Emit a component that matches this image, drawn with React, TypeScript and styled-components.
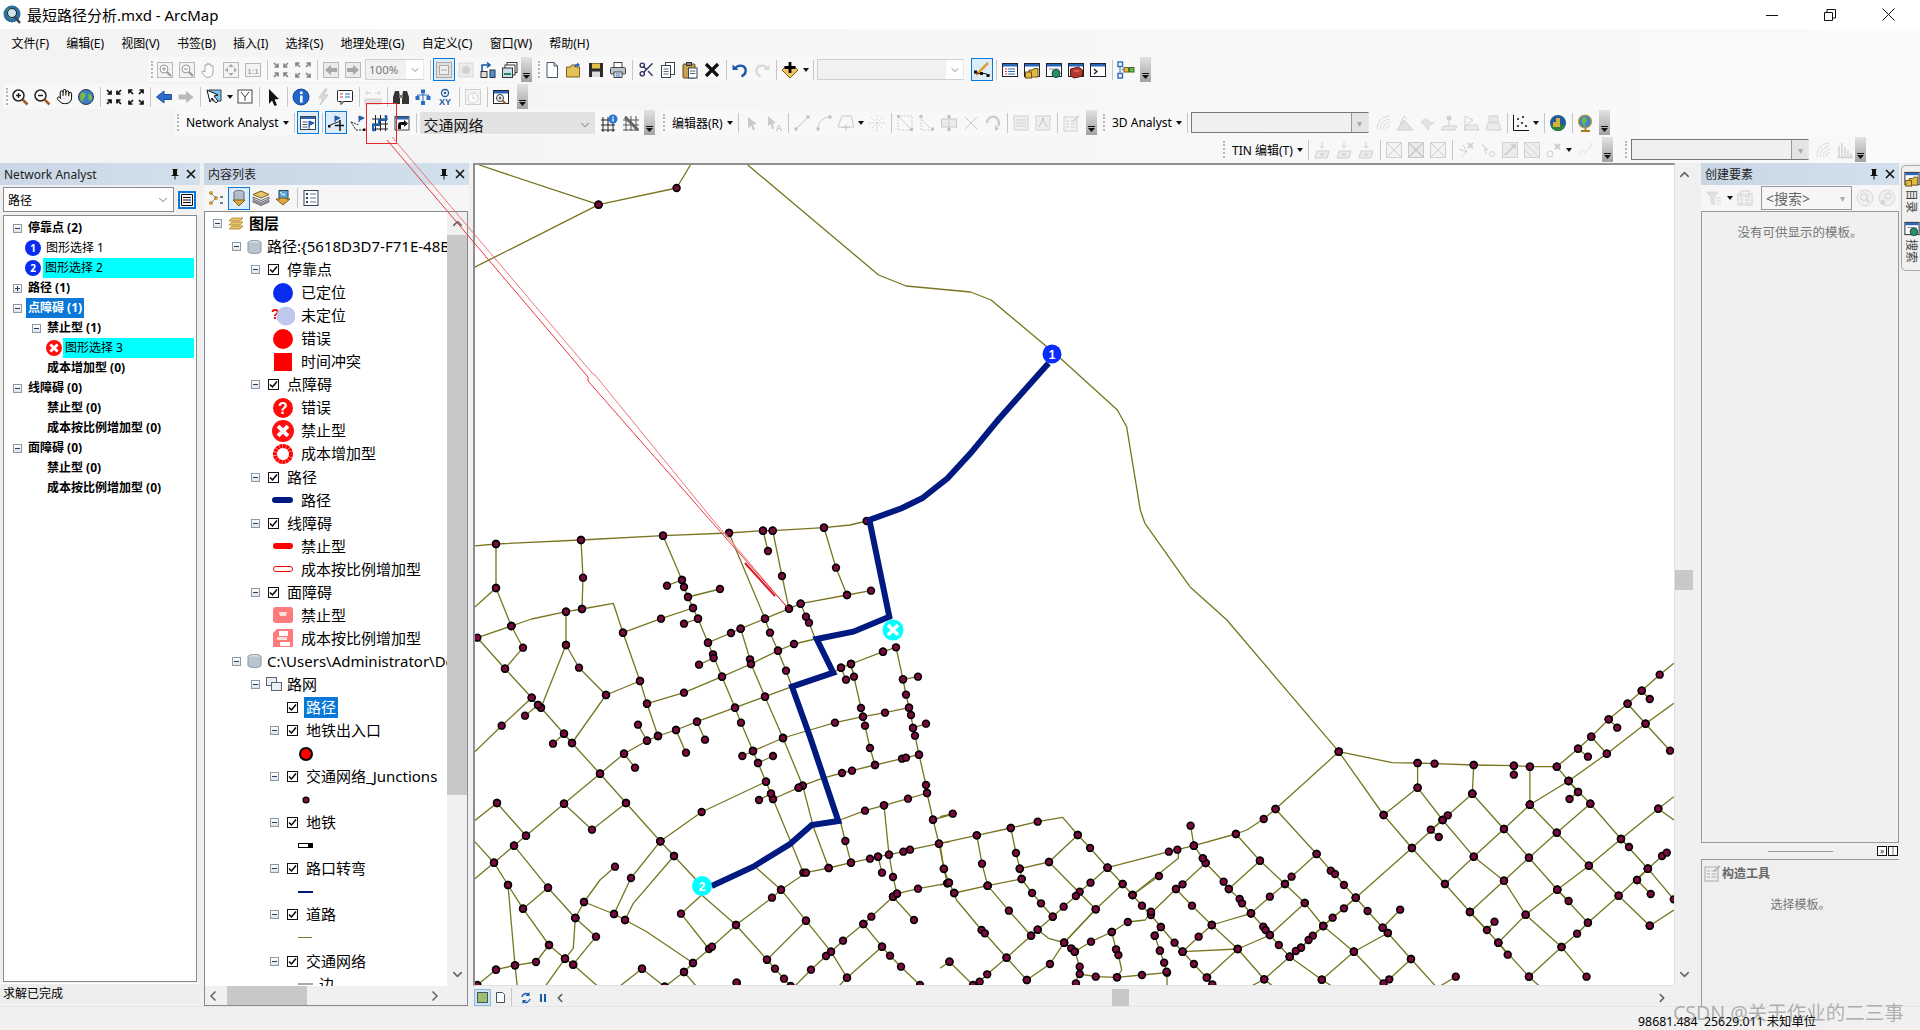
import React from 'react'
import styled, { createGlobalStyle } from 'styled-components'
import { Hand, Scissors, ChevronDown, ChevronUp, ChevronLeft, ChevronRight } from 'lucide-react'

const cjk = '"Noto Sans", "Noto Sans CJK SC", sans-serif'

const Global = createGlobalStyle`
html, body { margin: 0; padding: 0; background: #f0f0f0; }
* { box-sizing: border-box; }
body { font-family: ${cjk}; font-size: 12px; color: #000; overflow: hidden; }
`

/* ---------- map data, written in the pixel space of the crops ---------- */

const p6 = (x: number, y: number) => [470 + x / 2.178, 160 + y / 3]
const p7 = (x: number, y: number) => [470 + x / 3, 520 + y / 3]
const p8 = (x: number, y: number) => [940 + x / 2.119, 620 + y / 3]

// "x,y" is a junction, "x,y!" only a bend in the road
const roads6 = [
  '20,15! 280,134 450,84 480,15!',
  '280,134 8,323!',
  '605,15! 890,345! 950,378! 1090,396! 1135,420! 1250,553! 1290,600! 1410,750! 1430,800! 1460,1050! 1470,1090! 1568,1280!',
]

const roads7 = [
  '10,78! 78,72 333,60 579,47 777,39 879,32 908,32 1062,23 1140,15! 1190,3',
  '78,72 78,204 10,265!', '78,204 124,318 159,383 105,446', '124,318 22,353 105,446 185,533 95,617 10,700!',
  '185,533 204,555 213,563 282,641 306,669 390,761 468,849 571,964 612,1008 695,1097!',
  '333,60 339,173 336,267', '124,318 185,297! 288,275 336,267 430,250! 459,338 510,483 531,551 564,648',
  '288,275 288,375 213,563', '288,375 327,443 408,525 510,483', '408,525 306,669', '204,555 165,587', '282,641 249,671',
  '459,338 573,296 669,264', '654,231 750,207',
  '579,47 636,180 642,201 654,231 669,264 684,296 714,368 756,470 795,563 813,608 849,693 864,729 888,785 903,821 909,837 960,960! 1000,1058',
  '636,180 591,197', '684,296 642,311', '714,368 783,339 812,326 885,296 957,266 992,251 1131,225 1203,212',
  '777,39 885,296 900,338 924,392 948,452 966,500!', '908,32 936,168 957,266', '879,32 894,93', '1062,23 1098,143 1131,225',
  '812,326 840,418 843,432 885,530 939,654 998,797 1030,920! 1076,1044', '729,403 731,414 687,434',
  '531,551 642,518 756,470 843,432 924,392 972,372 1036,357!', '564,648 618,630 681,605 795,563 885,530 966,500!',
  '992,251 1008,290 1017,308 1036,357!', '618,630 648,698', '681,605 705,659', '564,648 531,662 504,614',
  '531,662 462,701 390,761', '462,701 495,743', '390,761 282,851 168,947 132,977 72,1028 10,1080!',
  '282,851 366,929 468,849', '81,849 168,947', '81,849 10,905!', '10,960! 72,1028 114,1095 159,1166 237,1275 285,1316 310,1334 385,1400!',
  '132,977 234,1103 316,1194 378,1250 309,1334', '234,1103 159,1166', '114,1095 135,1336 142,1400!',
  '78,1349 135,1336 198,1326 237,1275', '78,1349 22,1395', '285,1316 225,1400!', '316,1194 310,1285! 285,1316',
  '316,1194 342,1146 390,1080! 435,1040', '342,1146 432,1182 465,1200 530,1235! 669,1329 642,1356 584,1400',
  '432,1182 483,1074 571,964', '465,1200 490,1150! 612,1008', '571,964 695,876 888,785',
  '695,1125! 633,1181 717,1287', '695,1125! 798,1215 891,1319 915,1346 942,1376 962,1398',
  '669,1329 726,1280 798,1215 906,1133 933,1109 1008,1058 1076,1044 1143,1028 1200,1016 1224,1010 1257,1004 1300,995 1320,989 1407,971 1440,965!',
  '850,1035! 933,1109 1008,1202 1083,1295 1131,1373', '1008,1202 891,1319',
  '1269,1130 1204,1190 1180,1212 1119,1262 1083,1295 1068,1308 1023,1349 975,1398!',
  '1269,1130 1281,1121 1344,1106 1432,1090', '1269,1130 1332,1200', '1180,1212 1236,1280 1260,1307 1293,1340 1350,1395',
  '1236,1280 1131,1373 1105,1400!', '516,1346 584,1400', '516,1346 450,1398!', '642,1356 680,1400!', '800,1388 800,1388',
  '1110,900! 1126,963 1143,1028', '1110,900! 1185,872 1242,856 1314,836 1371,819', '1242,856 1257,1004 1269,1071 1281,1121', '1224,1010 1236,1058',
  '1278,382 1299,478 1308,524 1317,563 1323,585 1329,624 1335,647 1347,704 1368,795 1371,819 1389,899 1407,971 1422,1047 1432,1090',
  '1299,478 1344,470', '1329,624 1368,611', '1389,899 1440,885!', '1239,395 1143,432 1113,443 1090,458!',
  '1143,432 1173,564 1179,590 1185,617 1200,684 1215,735', '1128,479 1113,443', '1152,470 1143,432',
  '1020,630! 1095,608 1179,590 1245,578 1317,563', '939,654 1020,630!', '849,693 939,654', '817,708 849,693', '864,729 909,708',
  '1056,775! 1116,759 1146,752 1215,735 1296,716 1308,713 1347,704', '986,803 998,797 1056,775!', '909,837 986,803', '867,840 903,821',
  '1239,395 1278,382!',
]

const roads8 = [
  '530,-99! 608,0! 845,395 958,428! 1012,429 1048,431 1131,435 1216,437 1250,440 1307,440 1352,386 1380,350 1417,298 1457,251 1487,212 1525,164 1555,130!',
  '1216,437 1216,464', '1307,440 1332,483 1378,551 1443,657 1500,746 1555,838', '1332,483 1413,401 1495,311 1555,250!',
  '1380,350 1413,401', '1457,251 1495,311 1547,392', '1332,483 1250,554', '1250,440 1250,554', '1131,435 1128,521', '1012,429 1012,503',
  '1352,386 1373,410', '1417,298 1435,323', '1487,212 1504,237',
  '845,395 940,585 1000,684 1070,792 1123,876 1183,968 1248,1070 1270,1098!',
  '940,585 1012,503 1065,600 1131,710 1195,782 1241,884 1317,981 1370,1070',
  '1128,521 1065,600 1000,684 881,833 812,918 765,983 741,1010 687,1078 660,1098!',
  '1128,521 1195,627 1248,713 1308,809 1373,908', '1250,554 1195,627 1131,710 1070,792',
  '1250,554 1307,638 1375,737 1438,827 1504,917', '1378,551 1307,638 1248,713 1195,782 1123,876',
  '1555,530! 1522,566 1443,657 1375,737 1308,809 1241,884 1183,968', '1500,746 1438,827 1373,908 1350,941 1317,981 1248,1070',
  '1555,870! 1504,917', '1500,746 1530,708 1540,698', '1443,657 1460,681', '1477,780 1506,822', '1500,746 1477,780', '1308,809 1332,843',
  '1076,586 1065,600 1040,629 1057,651', '1175,905 1159,930 1123,876', '1183,968 1203,1004', '1352,516 1334,537', '1332,483 1352,516', '1522,566 1555,600!',
  '845,395 711,567 686,597 650,630! 627,642 538,677 503,689 485,695 355,743',
  '711,567 798,702 745,770 731,792 699,830 659,880', '627,642 678,722 731,792 773,849 812,918',
  '798,702 828,752 837,762 856,795 881,833 906,873 938,923 949,939 998,1017 1050,1098!',
  '678,722 612,807', '557,715 563,729 601,785 612,807 635,837 640,850 659,880 685,920 690,930 699,945 718,975 741,1010 809,1079 830,1098!',
  '563,729 514,793 500,807 447,880', '500,807 534,857 576,915 631,987 687,1078 705,1098!', '773,849 699,945 631,987 566,1072',
  '659,880 576,915', '0,670! 78,646 150,624 207,605 260,592! 292,645 318,684 355,743 387,792 408,825 428,857 447,885 468,921 497,968 514,995 538,1032 565,1073 577,1093',
  '292,645 231,726 169,746', '30,819 101,797 173,777', '78,646 89,731 101,797', '150,624 161,699 169,746 173,777 195,819 214,850 239,890 207,929 193,947 141,1013 100,1063 84,1085',
  '231,726 330,868 263,968', '355,743 319,788 296,815 288,828 262,860 239,890', '101,797 146,872 193,947',
  '30,819 35,840! 88,930 95,940 141,1013 184,1080', '387,792 330,868 263,968 233,1032 184,1080',
  '207,929 230,955! 263,968 278,985 286,995 296,1040 288,1090', '0,670! 8,746 19,788 30,819', '505,695! 505,715! 408,825', '464,768 408,825',
  '538,677 531,617', '538,677 557,715', '447,875 435,900! 398,906 364,936 320,965 285,995', '364,936 373,988 378,1005 385,1050! 375,1072 330,1070 296,1062',
  '375,1072 428,1065 481,1058 481,1098!', '468,921 455,947', '466,992 475,1028 480,1055', '455,947 466,992',
  '20,1025 70,1095', '20,1025 0,1045!', '881,833 856,865 832,893 812,918 790,947 781,960 765,983 754,993 741,1010',
  '812,918 877,995 940,1090', '877,995 949,939', '938,923 975,869', '877,995 809,1079', '998,1017 952,1078', '631,987 514,995', '514,995 548,950 576,915',
  '1093,1070 1060,1098!', '0,590! 27,581', '0,795! 19,788',
]

const routeLine = [
  ...[[1260, 610], [1150, 780], [1090, 880], [1040, 955], [985, 1015], [940, 1045], [870, 1080]].map(([x, y]) => p6(x, y)),
  ...[[1258, 290], [1150, 335], [1040, 357], [1090, 458], [966, 500], [1020, 650], [1105, 903], [1025, 915], [960, 972], [850, 1040], [725, 1098]].map(([x, y]) => p7(x, y)),
]

type Pt = number[]

const parse = (lines: string[], tf: (x: number, y: number) => Pt) => {
  const polylines: string[] = []
  const nodes: Pt[] = []
  lines.forEach((line) => {
    const pts = line.split(' ').map((tok) => {
      const [x, y] = tok.replace('!', '').split(',').map(Number)
      const pt = tf(x, y)
      if (!tok.endsWith('!')) nodes.push(pt)
      return pt
    })
    polylines.push(pts.map((p) => `${p[0].toFixed(1)},${p[1].toFixed(1)}`).join(' '))
  })
  return { polylines, nodes }
}

const net = [parse(roads6, p6), parse(roads7, p7), parse(roads8, p8)]
const roadLines = net.flatMap((n) => n.polylines)
const nodeList = net.flatMap((n) => n.nodes)

/* ---------- toolbar glyphs, all on an 18 box ---------- */

const win = (body: React.ReactNode) => (
  <>
    <rect x="1.5" y="2.5" width="15" height="13" fill="#fff" stroke="#223" />
    <rect x="2" y="3" width="14" height="2.5" fill="#2a66b8" />
    {body}
  </>
)

const G: Record<string, React.ReactNode> = {
  zoomIn: <><circle cx="7.5" cy="7.5" r="5.5" fill="#fff" stroke="#222" strokeWidth="1.5" /><path d="M5 7.5h5M7.5 5v5" stroke="#222" strokeWidth="1.5" /><path d="M11.5 11.5l5 5" stroke="#a05a2c" strokeWidth="2.5" /></>,
  zoomOut: <><circle cx="7.5" cy="7.5" r="5.5" fill="#fff" stroke="#222" strokeWidth="1.5" /><path d="M5 7.5h5" stroke="#222" strokeWidth="1.5" /><path d="M11.5 11.5l5 5" stroke="#a05a2c" strokeWidth="2.5" /></>,
  globe: <><circle cx="9" cy="9" r="7.5" fill="#3b7fc4" stroke="#335" /><path d="M5 4c3 1 5 2 3 5s-3 3-2 6c-3-2-4-7-1-11zM11 6c3 0 4 2 4 4s-2 3-3 2 0-3-1-6z" fill="#7dba3a" /></>,
  fixIn: <path d="M2 2l4 4M6 2.5V6H2.5M16 2l-4 4M12 2.5V6h3.5M2 16l4-4M6 15.5V12H2.5M16 16l-4-4M12 15.5V12h3.5" stroke="#111" strokeWidth="1.7" fill="none" />,
  fixOut: <path d="M6 6L2 2M2 5.5V2h3.5M12 6l4-4M16 5.5V2h-3.5M6 12l-4 4M2 12.5V16h3.5M12 12l4 4M16 12.5V16h-3.5" stroke="#111" strokeWidth="1.7" fill="none" />,
  back: <path d="M1.5 9L9 3v3.5h7.5v5H9V15z" fill="#2c6ecb" stroke="#1c4f9a" />,
  fwd: <path d="M16.5 9L9 3v3.5H1.5v5H9V15z" fill="#b9b9b9" />,
  selMap: <><path d="M4 2h12v11H8z" fill="#7ec4e8" stroke="#345" /><path d="M2 2l3 12 2-4 4 5 2-2-4-5 4-1z" fill="#fff" stroke="#111" /></>,
  clear: <><rect x="2" y="2" width="14" height="13" fill="#fff" stroke="#444" /><path d="M5 4l4 5 4-5M9 9v4" stroke="#444" fill="none" /></>,
  pointer: <path d="M5 1l10 10-4.5.5L13 17l-2.5 1-2.5-5.5L5 16z" fill="#111" />,
  identify: <><circle cx="9" cy="9" r="8" fill="#1f67c8" stroke="#124b98" /><rect x="8" y="7.5" width="2.6" height="7" fill="#fff" /><circle cx="9.3" cy="4.8" r="1.5" fill="#fff" /></>,
  flash: <path d="M11 1L5 10h4l-3 7 8-10H10l3-6z" fill="#bbb" stroke="#999" />,
  find: <><rect x="1.5" y="2.5" width="15" height="11" rx="1" fill="#fff" stroke="#223" /><path d="M4 6h3M4 9h3" stroke="#c33" /><path d="M9 6h5M9 9h5" stroke="#36c" /><path d="M5 13.5v3l3-3" fill="#fff" stroke="#223" /></>,
  measure: <><path d="M2 5h5M3.5 3L2 5l1.5 2M16 5h-5M14.5 3L16 5l-1.5 2" stroke="#aaa" fill="none" /><rect x="1" y="11" width="16" height="5" fill="#ccc" stroke="#aaa" /></>,
  binocular: <><path d="M3 3h4l1 6v7H1V9zM15 3h-4l-1 6v7h7V9z" fill="#343434" /><rect x="7" y="7" width="4" height="3" fill="#777" /></>,
  graph: <><rect x="7" y="1.5" width="4" height="4" fill="#2a6ec4" /><rect x="1.5" y="8" width="4" height="4" fill="#2a6ec4" /><rect x="12.5" y="8" width="4" height="4" fill="#2a6ec4" /><rect x="7" y="13" width="4" height="4" fill="#2a6ec4" /><path d="M9 5.5V15M3.5 8V7H14.5v1" stroke="#2a6ec4" fill="none" /></>,
  xy: <><circle cx="9" cy="5" r="3.5" fill="none" stroke="#1a5aa8" strokeWidth="1.3" /><circle cx="9" cy="5" r="1.2" fill="#1a5aa8" /><text x="9" y="17" fontSize="9" fontWeight="700" fontFamily="Liberation Sans" textAnchor="middle" fill="#1a5aa8">XY</text></>,
  clock: <><rect x="1.5" y="1.5" width="15" height="15" fill="#eee" stroke="#aaa" /><circle cx="9" cy="10" r="5" fill="#fff" stroke="#aaa" /><path d="M9 7v3l2 1" stroke="#aaa" fill="none" /></>,
  viewer: win(<><circle cx="8" cy="10" r="3.5" fill="#fff" stroke="#333" /><path d="M6.5 10h3M8 8.5v3" stroke="#333" /><path d="M10.5 12.5l3 3" stroke="#a05a2c" strokeWidth="1.8" /></>),
  pZoomIn: <><rect x="1.5" y="1.5" width="15" height="15" fill="#eee" stroke="#777" /><circle cx="8" cy="8" r="4" fill="#fff" stroke="#333" /><path d="M11 11l4 4" stroke="#333" strokeWidth="2" /><path d="M6 8h4M8 6v4" stroke="#333" /></>,
  pZoomOut: <><rect x="1.5" y="1.5" width="15" height="15" fill="#eee" stroke="#777" /><circle cx="8" cy="8" r="4" fill="#fff" stroke="#333" /><path d="M11 11l4 4" stroke="#333" strokeWidth="2" /><path d="M6 8h4" stroke="#333" /></>,
  pHand: <path d="M5 9V4.5a1 1 0 012 0V3a1 1 0 012 0v1a1 1 0 012 0v1.5a1 1 0 012 0V11c0 3-2 5.5-5 5.5-3 0-4-2-6-5-1-1.5 1-2 3-.5z" fill="#fff" stroke="#555" />,
  pFull: <><rect x="1.5" y="1.5" width="15" height="15" fill="#eee" stroke="#777" /><path d="M9 3l2.5 3h-5zM9 15l2.5-3h-5zM3 9l3-2.5v5zM15 9l-3-2.5v5z" fill="#555" /></>,
  p11: <><rect x="1.5" y="2.5" width="15" height="13" fill="#eee" stroke="#777" /><text x="9" y="12.5" fontSize="8" fontWeight="700" fontFamily="Liberation Sans" textAnchor="middle" fill="#555">1:1</text></>,
  pBack: <><rect x="1.5" y="1.5" width="15" height="15" fill="#ddd" stroke="#777" /><path d="M3 9l6-5v3h6v4H9v3z" fill="#555" /></>,
  pFwd: <><rect x="1.5" y="1.5" width="15" height="15" fill="#ddd" stroke="#777" /><path d="M15 9L9 4v3H3v4h6v3z" fill="#555" /></>,
  layoutPage: <><rect x="1.5" y="1.5" width="15" height="15" fill="#e0e0e0" stroke="#aaa" /><rect x="4.5" y="4.5" width="9" height="9" fill="#f0f0f0" stroke="#aaa" /><path d="M6 9h6" stroke="#aaa" /></>,
  refreshOff: <><rect x="2" y="2" width="14" height="14" fill="#ddd" stroke="#bbb" /><circle cx="9" cy="9" r="4" fill="#aaa" /></>,
  arrows: <><path d="M3 10V4h8M8 1.5L11 4 8 6.5" stroke="#1a5aa8" strokeWidth="1.6" fill="none" /><rect x="2" y="10.5" width="6" height="6" fill="#ddd" stroke="#333" /><rect x="11" y="9" width="5" height="7.5" fill="#4a90d8" stroke="#333" /></>,
  pages: <><rect x="6" y="1.5" width="10" height="10" fill="#fff" stroke="#333" /><rect x="4" y="4" width="10" height="10" fill="#fff" stroke="#333" /><rect x="1.5" y="7" width="10" height="9.5" fill="#cde" stroke="#333" /><path d="M3 13h7" stroke="#285" strokeWidth="2" /></>,
  newDoc: <><path d="M4 1.5h7l3.5 3.5v11.5H4z" fill="#fff" stroke="#456" /><path d="M11 1.5V5h3.5" fill="none" stroke="#456" /></>,
  open: <><path d="M1.5 6h4l1-2h4v2h4v10h-13z" fill="#e4c25a" stroke="#7a5f1e" /><path d="M12 1.5l3 2.5-3 2.5V5c-1.5 0-2.5.5-3 2 0-2.5 1-4 3-4z" fill="#2a66b8" /></>,
  save: <><rect x="2" y="2" width="14" height="14" fill="#2b2b2b" /><rect x="5" y="2.5" width="8" height="5" fill="#e6c04a" /><rect x="5" y="10.5" width="8" height="5.5" fill="#ddd" /></>,
  print: <><rect x="5" y="1.5" width="8" height="5" fill="#fff" stroke="#444" /><rect x="1.5" y="6.5" width="15" height="6.5" rx="1" fill="#bcc5cf" stroke="#444" /><rect x="5" y="11" width="8" height="5.5" fill="#fff" stroke="#444" /><path d="M6.5 13h5M6.5 15h5" stroke="#2a66b8" /></>,
  copy: <><rect x="6.5" y="1.5" width="9" height="12" fill="#fff" stroke="#345" /><rect x="2.5" y="4.5" width="9" height="12" fill="#fff" stroke="#345" /><path d="M4.5 8h5M4.5 10.5h5M4.5 13h5" stroke="#567" /></>,
  paste: <><rect x="2" y="3" width="12" height="14" rx="1" fill="#c9a14e" stroke="#5d4a20" /><rect x="5.5" y="1.5" width="5" height="3" fill="#888" stroke="#333" /><rect x="7.5" y="7" width="8.5" height="10" fill="#fff" stroke="#345" /><path d="M9 10h5.5M9 12.5h5.5" stroke="#567" /></>,
  del: <path d="M3 3l12 12M15 3L3 15" stroke="#111" strokeWidth="3.2" />,
  undo: <><path d="M4 8c2-4.500 9-4.500 10.500 0 1 3.500-1.500 6-4 7.500" fill="none" stroke="#1a5aa8" strokeWidth="2.4" /><path d="M1.500 3.500L7.500 9H1.500z" fill="#1a5aa8" /></>,
  redo: <><path d="M14 8C12 3.500 5 3.500 3.500 8c-1 3.500 1.500 6 4 7.500" fill="none" stroke="#bbb" strokeWidth="2.4" /><path d="M16.500 3.500L10.500 9h6z" fill="#bbb" /></>,
  addData: <><path d="M9 17L1 9l3-3h10l3 3z" fill="#eec65b" stroke="#7a5f1e" /><path d="M9 1v11M3.500 6.500h11" stroke="#000" strokeWidth="2.8" /></>,
  editTool: <><path d="M3 14l12-12" stroke="#e0a030" strokeWidth="2.5" /><path d="M1 11l5 1.500 6 0 4.500 2" stroke="#222" fill="none" /><rect x="1" y="9.5" width="3" height="3" fill="#111" /><rect x="7" y="11" width="3" height="3" fill="#111" /><rect x="13.5" y="13" width="3" height="3" fill="#111" /></>,
  wTable: win(<><path d="M4 8h2M4 10.500h2M4 13h2" stroke="#c33" /><path d="M7 8h7M7 10.500h7M7 13h7" stroke="#36a" /></>),
  wCat: win(<><path d="M6 16V9h4l1-1.500h4V16z" fill="#e3b93f" stroke="#6a5318" /><rect x="2.5" y="11" width="6" height="6" fill="#e3b93f" stroke="#6a5318" /></>),
  wGlobe: win(<><path d="M4 8h10" stroke="#889" /><circle cx="11" cy="12.5" r="4" fill="#2d8f5a" stroke="#145" /></>),
  wRed: win(<><path d="M3.500 8l8-2 4 3v6l-8 2-4-2z" fill="#b33a2c" stroke="#5a1a12" /><path d="M7 10h5" stroke="#e88" /></>),
  wCmd: win(<path d="M5 8l3 2.500L5 13" stroke="#111" fill="none" strokeWidth="1.2" />),
  model: <><rect x="1" y="1" width="4.5" height="4.5" fill="#f7f7f7" stroke="#2a6ec4" strokeWidth="1.4" /><rect x="1" y="12.5" width="4.5" height="4.5" fill="#f7f7f7" stroke="#2a6ec4" strokeWidth="1.4" /><rect x="7" y="6.5" width="4.5" height="4.5" fill="#e8b93a" stroke="#7a5f1e" /><rect x="12.5" y="6.5" width="4.5" height="4.5" fill="#6cb84c" stroke="#2a6e1c" /><path d="M3 5.500v7M5 8.700h2M11.500 8.700h1" stroke="#2a6ec4" /></>,
  naWin: <><rect x="1.5" y="2.5" width="15" height="13" fill="#fff" stroke="#345" /><rect x="2" y="3" width="14" height="2" fill="#2a66b8" /><path d="M3.500 8h5M3.500 10.500h5M3.500 13h5" stroke="#456" /><path d="M10 15V7l5 2-4 2" fill="#2a66b8" stroke="#1c4f9a" /></>,
  flagPlus: <><path d="M8 8V2l5 2-4 2" fill="#2a66b8" stroke="#1c4f9a" /><path d="M1 12l6-2.500 5.500-2" stroke="#333" /><rect x="1" y="11" width="2.5" height="2.5" fill="#111" /><path d="M13 6v11M8 11.500h9" stroke="#111" strokeWidth="1.5" /></>,
  flagBreak: <><path d="M10 8V2l5 2-4 2" fill="#2a66b8" stroke="#1c4f9a" /><path d="M2 8l5 8M2 8l8 3M7 16h9" stroke="#222" strokeDasharray="2 1" fill="none" /><rect x="14" y="14.5" width="2.5" height="2.5" fill="#111" /></>,
  routeGrid: <><path d="M1 5h16M1 10h16M1 15h16M4.500 1v16M9.500 1v16M14.500 1v16" stroke="#222" /><path d="M2 16V11h6V6h7V2" stroke="#1f5fb4" strokeWidth="2" fill="none" /><circle cx="2.5" cy="16" r="1.5" fill="#1f5fb4" /><circle cx="15" cy="2.5" r="1.5" fill="#1f5fb4" /></>,
  solve: <><rect x="2" y="2.5" width="14" height="13.5" fill="#fff" stroke="#345" /><rect x="2.5" y="3" width="13" height="2.5" fill="#2a66b8" /><path d="M5 15v-4c0-2 1-3 3-3h3V6l4 3.500L11 13v-2H8v4z" fill="#111" /></>,
  gridInfo: <><path d="M1 6h14M1 11h14M1 16h14M3 3v15M8 3v15M13 3v15" stroke="#222" /><circle cx="13" cy="5" r="4.5" fill="#2a76d8" /><rect x="12.3" y="4.5" width="1.4" height="3" fill="#fff" /><rect x="12.3" y="2.5" width="1.4" height="1.3" fill="#fff" /></>,
  gridTool: <><path d="M1 6h16M1 11h16M1 16h16M4 2v15M9 2v15M14 2v15" stroke="#555" /><path d="M3 3l13 13" stroke="#666" strokeWidth="3" /></>,
  arrowR: <path d="M5 3l9 7-4 .5 2 5-2 1-2-5-3 3z" fill="#999" />,
  arrowA: <><path d="M3 2l8 7-3 .5 1 5-2 .5-1-5-3 2z" fill="#999" /><text x="14" y="17" fontSize="9" fontWeight="700" fontFamily="Liberation Sans" textAnchor="middle" fill="#999">A</text></>,
  line: <><path d="M3 15L15 3" stroke="#999" /><rect x="1.5" y="13.5" width="3" height="3" fill="#888" /><rect x="13.5" y="1.5" width="3" height="3" fill="#888" /></>,
  curve: <><path d="M3 15C3 8 8 3 15 3" stroke="#999" fill="none" /><rect x="1.5" y="13.5" width="3" height="3" fill="#888" /><rect x="13.5" y="1.5" width="3" height="3" fill="#888" /></>,
  polyEd: <><path d="M5 2h9l3 11H1z" fill="none" stroke="#999" /><path d="M9 10v7M5.500 13.500h7" stroke="#999" /></>,
  sparkle: <path d="M9 1v16M1 9h16M3 3l12 12M15 3L3 15" stroke="#aaa" strokeDasharray="2 1.5" />,
  boxDiag: <><rect x="2" y="2" width="14" height="14" fill="none" stroke="#aaa" strokeDasharray="2 1" /><path d="M2 2l14 14" stroke="#aaa" /><rect x="1" y="1" width="3" height="3" fill="#888" /><rect x="14" y="14" width="3" height="3" fill="#888" /></>,
  trace: <><path d="M3 2v14h12" fill="none" stroke="#aaa" strokeDasharray="2 1" /><path d="M3 5l9 9" stroke="#aaa" /><rect x="1.5" y="1" width="3" height="3" fill="#888" /><rect x="13" y="13.5" width="3" height="3" fill="#888" /></>,
  splitBox: <><rect x="1.5" y="5" width="15" height="8" fill="#ddd" stroke="#999" /><path d="M9 1v16" stroke="#999" /><rect x="7.5" y="1" width="3" height="3" fill="#888" /><rect x="7.5" y="14" width="3" height="3" fill="#888" /></>,
  cross: <path d="M3 15L15 3M3 3l12 12" stroke="#999" />,
  rotate: <><path d="M3 9a6 6 0 1111 3" fill="none" stroke="#999" strokeWidth="2.2" /><path d="M11 17v-6l4 4z" fill="#999" /></>,
  attr: <><rect x="2" y="2" width="14" height="14" fill="#e4e4e4" stroke="#aaa" /><path d="M4 6h10M4 9h10M4 12h10" stroke="#aaa" /></>,
  sketch: <><rect x="2" y="2" width="14" height="14" fill="#e4e4e4" stroke="#aaa" /><path d="M5 13l4-8 4 8" fill="none" stroke="#888" /><rect x="8" y="4" width="2" height="2" fill="#888" /></>,
  task: <><rect x="2" y="3" width="13" height="14" fill="#eee" stroke="#aaa" /><path d="M4 7h3M4 10h3M4 13h3M8.500 7h5M8.500 10h5M8.500 13h5" stroke="#aaa" /><path d="M11 7l6-5" stroke="#aaa" strokeWidth="1.5" /></>,
  terrainA: <path d="M3 16c0-7 3-13 12-14M6 16c0-5 3-10 9-11M9 16c0-3 2-7 7-8M12 16c0-2 1-4 4-5" stroke="#bbb" fill="none" />,
  terrainB: <><path d="M1 16l7-10 9 10z" fill="#ccc" stroke="#aaa" /><path d="M4 10l4-8 3 3" stroke="#aaa" fill="none" /></>,
  terrainC: <path d="M3 8c3-4 6-4 8 0l5 1-5 3-1 4-3-4z" fill="#ccc" stroke="#bbb" />,
  terrainD: <><circle cx="9" cy="4" r="2.5" fill="#aaa" /><path d="M9 6v6" stroke="#aaa" /><path d="M1 16l3-4h13l-2 4z" fill="#ddd" stroke="#aaa" /></>,
  terrainE: <><path d="M3 2l8 4-6 4M3 2v12" stroke="#aaa" fill="none" /><path d="M2 16l2-5h11l2 5z" fill="#ddd" stroke="#aaa" /></>,
  terrainF: <><path d="M5 2h9v6H5z" fill="#ddd" stroke="#aaa" /><path d="M2 16l2-7h11l2 7z" fill="#ddd" stroke="#aaa" /></>,
  scatter: <><path d="M1.500 1v15.500H17" stroke="#111" fill="none" /><path d="M5 5h2M6 4v2M10 3h2M11 2v2M9 9h2M10 8v2M13 12h2M14 11v2M5 12h2M6 11v2" stroke="#111" /></>,
  scene: <><circle cx="9" cy="9" r="8" fill="#1f5a9c" /><path d="M2 11c3-1 11-1 14 0-1 4-4 6-7 6s-6-2-7-6z" fill="#2d7f3a" /><rect x="7" y="4" width="4" height="9" fill="#d9b23a" /><rect x="4" y="8" width="3" height="5" fill="#d9b23a" /></>,
  arcGlobe: <><circle cx="8" cy="7.5" r="6.5" fill="#3c86c9" stroke="#c89a2b" strokeWidth="1.2" /><path d="M6 3c3 0 5 2 3 5-2 2-1 3-1 5-3-2-4-7-2-10z" fill="#78b83c" /><path d="M4 17h9M8.500 14v3" stroke="#a47c1e" strokeWidth="1.8" /></>,
  tinA: <><path d="M9 1v6M7 5l2 2 2-2" stroke="#aaa" fill="none" /><path d="M4 10h12l-2 7H2z" fill="#ddd" stroke="#aaa" /><rect x="7" y="12" width="4" height="3" fill="#bbb" /></>,
  xBox: <><rect x="1.5" y="1.5" width="15" height="15" fill="#eee" stroke="#aaa" /><path d="M1.500 1.500l15 15M16.500 1.500l-15 15" stroke="#aaa" /></>,
  xBoxD: <><rect x="1.5" y="1.5" width="15" height="15" fill="#ddd" stroke="#999" /><path d="M1.500 1.500l15 15M16.500 1.500l-15 15" stroke="#999" strokeWidth="1.5" /></>,
  tinB: <><path d="M2 8l8 3-6 5M6 4l4 7" stroke="#aaa" fill="none" /><path d="M11 2l5 5M16 2l-5 5" stroke="#aaa" strokeWidth="2" /></>,
  tinC: <><path d="M3 3l6 6-3 0 1 4" fill="#ccc" stroke="#aaa" /><circle cx="13" cy="13" r="2.5" fill="none" stroke="#aaa" /></>,
  tinD: <><rect x="1.5" y="1.5" width="15" height="15" fill="#ddd" stroke="#aaa" /><path d="M4 14L14 4M10 4h4v4" stroke="#999" fill="none" strokeWidth="1.5" /></>,
  tinE: <><rect x="1.5" y="1.5" width="15" height="15" fill="#e4e4e4" stroke="#aaa" /><path d="M2 2l14 14M2 9l7 7M9 2l7 7" stroke="#aaa" /></>,
  tinF: <><circle cx="5" cy="13" r="3" fill="none" stroke="#aaa" /><path d="M10 3l5 5M15 3l-5 5" stroke="#999" strokeWidth="2" /></>,
  tinG: <path d="M2 14l5-5 2 3 6-8M2 9l5 5M13 2l3 2-2 3" stroke="#bbb" fill="none" strokeDasharray="2 1" />,
  bars: <path d="M3 16V5M6 16V2M9 16V6M12 16V9M15 16v-4M1.500 16.500H17" stroke="#aaa" strokeWidth="1.5" />,
  funnel: <><path d="M1 3h12L9 8v8l-3-2V8z" fill="#ccc" stroke="#bbb" /><path d="M11 9h5M11 12h5M11 15h5" stroke="#bbb" /></>,
  list: <><rect x="2" y="5" width="14" height="11" fill="#eee" stroke="#aaa" /><rect x="5" y="2" width="8" height="4" fill="#eee" stroke="#aaa" /><path d="M4 8h3M4 11h3M4 14h3M9 8h5M9 11h5M9 14h5" stroke="#aaa" /></>,
  searchOff: <><circle cx="9" cy="9" r="8" fill="#e8e8e8" stroke="#bbb" /><circle cx="8" cy="8" r="3.5" fill="none" stroke="#aaa" /><path d="M10.500 10.500l3 3" stroke="#aaa" strokeWidth="1.5" /></>,
  searchX: <><circle cx="9" cy="9" r="8" fill="#e8e8e8" stroke="#bbb" /><circle cx="10" cy="7" r="3" fill="none" stroke="#aaa" /><path d="M3 11l4 4M7 11l-4 4" stroke="#aaa" strokeWidth="1.5" /></>,
  tocList: <><circle cx="3" cy="4" r="2" fill="#d89a2e" /><circle cx="8" cy="9" r="2" fill="#d89a2e" /><circle cx="3" cy="14" r="2" fill="#d89a2e" /><path d="M3 4l5 5-5 5" fill="none" stroke="#789" /><path d="M12 8h3M12 14h3" stroke="#456" strokeWidth="1.5" /></>,
  tocSource: <><ellipse cx="9" cy="3.5" rx="5" ry="2" fill="#c2ccd6" stroke="#667" /><path d="M4 3.500v7c0 1 2 2 5 2s5-1 5-2v-7" fill="#b3bcc6" stroke="#667" /><path d="M3 11l6 6 6-6z" fill="#e0a63c" stroke="#7a5f1e" /></>,
  tocVis: <><path d="M9 9L1 5.500 9 2l8 3.500z" fill="#e6c36a" stroke="#7a5f1e" /><path d="M1 8l8 3.500L17 8v2l-8 3.500L1 10z" fill="#ddd" stroke="#667" /><path d="M1 11.500L9 15l8-3.500V13l-8 3.500L1 13z" fill="#ccc" stroke="#667" /></>,
  tocSel: <><rect x="5" y="1.5" width="9" height="9" fill="#5ba8dd" stroke="#345" /><path d="M6 3l3 3 2-1" stroke="#fff" fill="none" /><path d="M2 10l7 6 7-6h-4V9H6v1z" fill="#e0a63c" stroke="#7a5f1e" /></>,
  tocOpts: <><rect x="2" y="1.5" width="14" height="15" fill="#fff" stroke="#345" /><rect x="4" y="4" width="2" height="2" fill="#246" /><rect x="4" y="8" width="2" height="2" fill="#246" /><rect x="4" y="12" width="2" height="2" fill="#246" /><path d="M8 5h6M8 9h6M8 13h6" stroke="#678" /></>,
}

/* ---------- frame ---------- */

const Page = styled.div`
position: relative;
width: 1920px;
height: 1030px;
display: flex;
flex-direction: column;
background: #f0f0f0;
overflow: hidden;
`

const TitleBar = styled.div`
height: 29px;
flex: none;
background: #fff;
display: flex;
align-items: center;
padding: 0 3px 0 3px;
font-size: 15px;
gap: 5px;
`

const WinButtons = styled.div`
margin-left: auto;
display: flex;
`

const WinButton = styled.div`
width: 58px;
height: 29px;
display: flex;
align-items: center;
justify-content: center;
`

const MenuBar = styled.div`
height: 28px;
flex: none;
display: flex;
align-items: center;
padding-left: 3px;
background: linear-gradient(90deg, #f3f3f3, #fafafa);
`

const MenuItem = styled.span`
padding: 0 8.6px;
font-size: 12px;
white-space: nowrap;
`

const Docks = styled.div`
height: 106px;
flex: none;
background: linear-gradient(90deg, #f3f3f3, #fafafa);
display: flex;
flex-direction: column;
`

const DockRow = styled.div<{ $h: number }>`
height: ${(p) => p.$h}px;
display: flex;
align-items: flex-start;
`

const Bar = styled.div<{ $left?: number; $w: number }>`
margin-left: ${(p) => p.$left || 0}px;
width: ${(p) => p.$w}px;
height: 25px;
flex: none;
display: flex;
align-items: center;
background: #f8f8f8;
padding-left: 6px;
position: relative;
`

const Grip = styled.i`
position: absolute;
left: 3px;
top: 4px;
height: 17px;
border-left: 2px dotted #b5b5b5;
`

const BarEnd = styled.div`
position: absolute;
right: 0;
top: 0;
bottom: 0;
width: 11px;
background: linear-gradient(#e2e2e2, #a2a2a2);
&::after {
content: '';
position: absolute;
left: 2px;
bottom: 3px;
width: 7px;
height: 6px;
background: linear-gradient(#111 0 1px, transparent 1px 2px, #111 2px);
clip-path: polygon(0 0, 100% 0, 100% 34%, 50% 100%, 0 34%);
}
`

const Tool = styled.span<{ $off?: boolean; $on?: boolean }>`
width: 22px;
height: 23px;
flex: none;
display: flex;
align-items: center;
justify-content: center;
${(p) => (p.$on ? 'outline: 1px solid #0a78d7; outline-offset: -1px; background: #dcecf9;' : '')}
& > svg {
${(p) => (p.$off ? 'filter: grayscale(1) opacity(.5);' : '')}
}
`

const Sep = styled.i`
width: 1px;
height: 20px;
margin: 0 2px 0 3px;
flex: none;
background: #c6c6c6;
`

const Caret = styled.i`
width: 9px;
flex: none;
display: flex;
justify-content: center;
&::after {
content: '';
border: 3px solid transparent;
border-top: 4px solid #111;
border-bottom: 0;
}
`

const BarLabel = styled.span`
font-size: 12px;
white-space: nowrap;
padding: 0 3px 0 6px;
`

const Combo = styled.div<{ $w: number; $sunk?: boolean }>`
width: ${(p) => p.$w}px;
height: 21px;
flex: none;
margin: 0 3px 0 1px;
border: ${(p) => (p.$sunk ? '1px solid #777' : '1px solid #cfcfcf')};
border-right-color: #e8e8e8;
background: ${(p) => (p.$sunk ? '#f0f0f0' : '#f1f1f1')};
display: flex;
align-items: center;
font-size: 11.5px;
color: #777;
padding-left: 3px;
overflow: hidden;
`

const ComboArrow = styled.span<{ $box?: boolean; $bare?: boolean }>`
margin-left: auto;
width: 17px;
height: 100%;
flex: none;
display: flex;
align-items: center;
justify-content: center;
color: #aaa;
font-size: 10px;
background: ${(p) => (p.$bare ? 'transparent' : p.$box ? '#e4e4e4' : '#fff')};
${(p) => (p.$box ? 'border-left: 1px solid #999;' : '')}
`

const RouteCombo = styled(Combo)`
background: #e2e2e2;
border-color: #e2e2e2;
color: #111;
font-size: 15px;
height: 22px;
padding-top: 4px;
`

const Main = styled.div`
height: 843px;
flex: none;
display: flex;
`

const Panel = styled.section<{ $w: number; $mr: number }>`
width: ${(p) => p.$w}px;
margin-right: ${(p) => p.$mr}px;
flex: none;
display: flex;
flex-direction: column;
`

const PanelHead = styled.header`
height: 22px;
flex: none;
background: linear-gradient(90deg, #c9d6e4, #d2e0ee);
display: flex;
align-items: center;
padding: 0 4px 0 4px;
font-size: 12px;
color: #222;
`

const HeadIcons = styled.span`
margin-left: auto;
display: flex;
gap: 6px;
align-items: center;
`

/* ---------- network analyst window ---------- */

const RouteSelect = styled.div`
height: 30px;
flex: none;
display: flex;
align-items: center;
padding: 2px 4px 3px 3px;
gap: 4px;
`

const SelectBox = styled.div`
flex: 1;
height: 25px;
border: 1px solid #8a8a8a;
background: #fff;
display: flex;
align-items: center;
justify-content: space-between;
padding: 0 3px 0 4px;
font-size: 12px;
`

const SquareBtn = styled.span`
width: 18px;
height: 18px;
display: flex;
align-items: center;
justify-content: center;
border: 2px solid #0a78d7;
background: #fff;
`

const NaTree = styled.div`
margin: 0 3px 0 3px;
width: 194px;
height: 767px;
flex: none;
border: 1px solid #8a8a8a;
background: #fff;
padding-top: 2px;
`

const NaRow = styled.div<{ $lvl: number; $head?: boolean }>`
height: 20px;
display: flex;
align-items: center;
padding-left: ${(p) => 9 + p.$lvl * 19}px;
font-size: 12px;
font-weight: ${(p) => (p.$head ? 700 : 400)};
white-space: nowrap;
`

const Expander = styled.span<{ $none?: boolean }>`
width: 9px;
height: 9px;
flex: none;
position: relative;
${(p) => (p.$none ? '' : 'border: 1px solid #8c9aa8; background: linear-gradient(#fff, #dfe3e8);')}
`

const ExpanderMark = styled.i<{ $plus?: boolean }>`
position: absolute;
left: 1px;
top: 3px;
width: 5px;
height: 1px;
background: #2a3a60;
${(p) => (p.$plus ? `&::after { content: ''; position: absolute; left: 2px; top: -2px; width: 1px; height: 5px; background: #2a3a60; }` : '')}
`

const NaText = styled.span<{ $hl?: 'cyan' | 'blue' }>`
margin-left: 4px;
height: 20px;
line-height: 20px;
padding: 0 2px;
${(p) => (p.$hl === 'cyan' ? 'background: #00ffff; flex: 1; margin-right: 2px; margin-left: 3px;' : '')}
${(p) => (p.$hl === 'blue' ? 'background: #0a78d7; color: #fff;' : '')}
`

const Dot = styled.span`
width: 16px;
height: 16px;
flex: none;
border-radius: 50%;
background: #0a2cf0;
color: #fff;
font-size: 10px;
font-weight: 700;
display: flex;
align-items: center;
justify-content: center;
margin: 0 -1px 0 -7px;
`

const XSlot = styled.span`
flex: none;
display: flex;
margin: 0 -2px 0 -5px;
`

const SolveNote = styled.div`
height: 20px;
margin-top: 1px;
padding-left: 3px;
font-size: 12px;
line-height: 20px;
border-top: 1px solid #fff;
background: #ededed;
`

/* ---------- table of contents ---------- */

const MiniBar = styled.div`
height: 26px;
flex: none;
display: flex;
align-items: center;
padding-left: 2px;
background: #f6f6f6;
`

const TocBox = styled.div`
flex: 1;
min-height: 0;
margin-right: 1px;
border: 1px solid #8a8a8a;
display: grid;
grid-template-columns: 1fr 20px;
grid-template-rows: 1fr 19px;
background: #f0f0f0;
`

const TocList = styled.div`
background: #fff;
overflow: hidden;
padding-top: 0;
`

const TocRow = styled.div<{ $lvl: number }>`
height: 23.06px;
display: flex;
align-items: center;
padding-left: ${(p) => 8 + p.$lvl * 19}px;
font-size: 15px;
line-height: 1;
white-space: nowrap;
& > svg { flex: none; }
`

const Gap = styled.span<{ $w: number }>`
width: ${(p) => p.$w}px;
flex: none;
`

const CheckBox = styled.span`
width: 11px;
height: 11px;
flex: none;
border: 1px solid #111;
background: #fff;
display: flex;
align-items: center;
justify-content: center;
`

const Sym = styled.span<{ $w: number }>`
width: ${(p) => p.$w}px;
height: 22px;
flex: none;
display: flex;
align-items: center;
justify-content: center;
`

const BoldLabel = styled.span`
font-weight: 700;
`

const SelLabel = styled.span`
background: #0a78d7;
color: #fff;
padding: 3px 2px;
margin-left: -2px;
`

const VScroll = styled.div`
display: flex;
flex-direction: column;
align-items: center;
background: #f0f0f0;
`

const ScrollEnd = styled.span<{ $end?: boolean }>`
height: 23px;
flex: none;
width: 100%;
display: flex;
align-items: center;
justify-content: center;
color: #666;
${(p) => (p.$end ? 'margin-top: auto;' : '')}
`

const VThumb = styled.span<{ $h: number; $top: number }>`
width: 100%;
height: ${(p) => p.$h}px;
margin-top: ${(p) => p.$top}px;
flex: none;
background: #c8c8c8;
`

const HScroll = styled.div`
display: flex;
align-items: center;
grid-column: 1 / span 2;
color: #666;
background: #f0f0f0;
`

const HThumb = styled.span<{ $w: number; $left: number; $h: number }>`
width: ${(p) => p.$w}px;
height: ${(p) => p.$h}px;
margin-left: ${(p) => p.$left}px;
background: #c8c8c8;
flex: none;
`

const PushEnd = styled.span`
margin-left: auto;
display: flex;
padding-right: 24px;
`

/* ---------- map ---------- */

const MapPane = styled.section`
width: 1220px;
margin-right: 8px;
flex: none;
display: grid;
grid-template-columns: 1fr 18px;
grid-template-rows: 1fr 20px;
`

const MapFrame = styled.div`
border-top: 2px solid #8f8f8f;
border-left: 2px solid #8f8f8f;
border-bottom: 1px solid #e0e0e0;
border-right: 1px solid #e0e0e0;
background: #fff;
overflow: hidden;
`

const MapSvg = styled.svg`
display: block;
`

const MapBar = styled.div`
grid-column: 1 / span 2;
display: flex;
align-items: center;
background: #f0f0f0;
color: #555;
padding: 3px 0 0 2px;
`

const ViewBtn = styled.span<{ $on?: boolean }>`
width: 15px;
height: 15px;
flex: none;
display: flex;
align-items: center;
justify-content: center;
${(p) => (p.$on ? 'background: #cfe3f5; outline: 1px solid #8ab8e0;' : '')}
`

/* ---------- create features ---------- */

const RightPanel = styled.section`
width: 198px;
flex: none;
display: flex;
flex-direction: column;
`

const PanelBody = styled.div<{ $h: number }>`
height: ${(p) => p.$h}px;
flex: none;
border: 1px solid #999;
background: #f0f0f0;
color: #777;
font-size: 12.5px;
text-align: center;
padding-top: 10px;
`

const SearchBox = styled.div`
width: 91px;
height: 24px;
margin: 0 2px 0 5px;
border: 1px solid #999;
font-size: 14px;
color: #666;
display: flex;
align-items: center;
padding-left: 4px;
`

const Splitter = styled.div`
height: 16px;
flex: none;
display: flex;
align-items: center;
justify-content: flex-end;
gap: 1px;
padding: 0 1px 0 65px;
`

const SplitLine = styled.span`
height: 1px;
width: 65px;
background: #999;
margin-right: 43px;
`

const SplitBtn = styled.span`
width: 10px;
height: 10px;
border: 1px solid #111;
background: #fff;
font-size: 8px;
line-height: 8px;
text-align: center;
color: #111;
`

const Construct = styled.div`
flex: 1;
min-height: 0;
border-top: 1px solid #999;
border-left: 1px solid #999;
background: #efefef;
color: #777;
font-size: 12px;
`

const ConstructHead = styled.div`
display: flex;
align-items: center;
gap: 1px;
font-weight: 700;
color: #666;
padding: 4px 0 0 1px;
`

const ConstructNote = styled.div`
text-align: center;
margin-top: 13px;
`

const SideTabs = styled.aside`
width: 20px;
margin-left: 2px;
margin-top: 2px;
height: 106px;
flex: none;
border: 1px solid #aaa;
border-right: 0;
border-radius: 5px 0 0 5px;
display: flex;
flex-direction: column;
align-items: center;
padding-top: 4px;
font-size: 12px;
color: #444;
`

const SideLabel = styled.span`
writing-mode: vertical-rl;
text-orientation: sideways;
white-space: nowrap;
height: 24px;
margin: 2px 0 7px;
`

const StatusBar = styled.footer`
flex: 1;
display: flex;
align-items: center;
padding-right: 104px;
justify-content: flex-end;
font-size: 12.3px;
border-top: 1px solid #e6e6e6;
background: #f0f0f0;
padding-top: 4px;
white-space: pre;
`

const Callout = styled.svg`
position: absolute;
left: 0;
top: 0;
pointer-events: none;
`

const Watermark = styled.div`
position: absolute;
left: 1673px;
top: 997px;
font-size: 19.5px;
color: rgba(110, 110, 110, 0.5);
white-space: nowrap;
`

const RoundSvg = styled.svg`
flex: none;
`

/* ---------- small helpers ---------- */

const Glyph = ({ k, s = 18 }: { k: string; s?: number }) => (
  <svg width={s} height={s} viewBox="0 0 18 18">{G[k]}</svg>
)

// tokens: name, -name greyed out, *name pressed, | separator, ^ drop arrow
const Tools = ({ spec }: { spec: string }) => (
  <>
    {spec.split(' ').map((tok, i) => {
      if (tok === '|') return <Sep key={i} />
      if (tok === '^') return <Caret key={i} />
      if (tok === 'hand') return <Tool key={i}><Hand size={17} strokeWidth={1.4} /></Tool>
      if (tok === 'cut') return <Tool key={i}><Scissors size={17} color="#336" /></Tool>
      const off = tok[0] === '-'
      const on = tok[0] === '*'
      return <Tool key={i} $off={off} $on={on}><Glyph k={off || on ? tok.slice(1) : tok} /></Tool>
    })}
  </>
)

const Exp = ({ plus }: { plus?: boolean }) => <Expander><ExpanderMark $plus={plus} /></Expander>

const Check = () => (
  <CheckBox>
    <svg width="9" height="9" viewBox="0 0 9 9"><path d="M1 4.5l2.5 2.5L8 1.5" stroke="#000" strokeWidth="1.5" fill="none" /></svg>
  </CheckBox>
)

const RedX = ({ s = 16 }: { s?: number }) => (
  <RoundSvg width={s} height={s} viewBox="0 0 20 20">
    <circle cx="10" cy="10" r="10" fill="#ff1010" />
    <path d="M5.5 5.5l9 9M14.5 5.5l-9 9" stroke="#fff" strokeWidth="3.6" />
  </RoundSvg>
)

const Pin = () => (
  <svg width="10" height="12" viewBox="0 0 10 12"><path d="M2.5 1h5v1H7v5h1.5v1H5.5v3.5h-1V8h-3V7H3V2h-.5z" fill="#111" /></svg>
)

const Close = () => (
  <svg width="10" height="10" viewBox="0 0 10 10"><path d="M1 1l8 8M9 1L1 9" stroke="#111" strokeWidth="1.6" /></svg>
)

const legend: Record<string, React.ReactNode> = {
  blue: <svg width="22" height="22"><circle cx="11" cy="11" r="10" fill="#0a2cf0" /></svg>,
  pale: <svg width="24" height="22"><text x="0" y="14" fontSize="14" fontWeight="700" fontFamily="Liberation Sans" fill="#f00000">?</text><circle cx="15" cy="11" r="9.5" fill="#c0c8f0" /></svg>,
  red: <svg width="22" height="22"><circle cx="11" cy="11" r="10" fill="#ff0000" /></svg>,
  square: <svg width="22" height="22"><rect x="2" y="2" width="18" height="18" fill="#ff0000" /></svg>,
  qMark: <svg width="22" height="22"><circle cx="11" cy="11" r="10" fill="#ff0a0a" /><text x="11" y="17" fontSize="16" fontWeight="700" fontFamily="Liberation Sans" textAnchor="middle" fill="#fff">?</text></svg>,
  cross: <RedX s={22} />,
  ring: <svg width="22" height="22"><circle cx="11" cy="11" r="8" fill="#fff" stroke="#ff0000" strokeWidth="4" strokeDasharray="3 .4" /></svg>,
  navy: <svg width="22" height="8"><rect x="0" y="1" width="21" height="6" rx="3" fill="#001a80" /></svg>,
  redLine: <svg width="22" height="8"><rect x="1" y="1" width="20" height="6" rx="3" fill="#ff0000" /></svg>,
  redHollow: <svg width="22" height="8"><rect x="1.5" y="1.5" width="19" height="5" rx="2.5" fill="#fff" stroke="#ff0000" /></svg>,
  poly: <svg width="22" height="20"><rect x="1" y="2" width="20" height="16" rx="3" fill="#ff7b7b" /><path d="M7 7h8l-1 4H8z" fill="#fbdede" /></svg>,
  polyHollow: <svg width="22" height="20"><path d="M1 5l4-4h16v18H1z" fill="#ff7b7b" /><rect x="7" y="3" width="9" height="5" fill="#fff" /><rect x="5" y="9" width="10" height="3" fill="#fbdede" /><rect x="8" y="14" width="10" height="4" fill="#fff" /></svg>,
  subway: <svg width="16" height="16"><circle cx="8" cy="8" r="6" fill="#ff0000" stroke="#000" strokeWidth="2" /></svg>,
  junction: <svg width="10" height="10"><circle cx="5" cy="5" r="3.6" fill="#000" /><circle cx="5" cy="5" r="2.2" fill="#7d0a3f" /></svg>,
  metro: <svg width="16" height="8"><rect x=".5" y="1.5" width="10" height="4" fill="#fff" stroke="#000" /><rect x="10" y="1" width="5" height="5" fill="#000" /></svg>,
  turn: <svg width="16" height="4"><rect width="15" height="2" y="1" fill="#001a80" /></svg>,
  road: <svg width="16" height="4"><rect width="14" height="1" y="1" fill="#7a7a20" /></svg>,
  edge: <svg width="16" height="4"><rect width="15" height="2" y="1" fill="#aaa" /></svg>,
}

type TocItem = {
  lvl: number
  exp?: boolean
  chk?: boolean
  sym?: string
  text?: string
  icon?: string
  bold?: boolean
  sel?: boolean
}

const dbIcon = (
  <svg width="15" height="14" viewBox="0 0 15 14"><ellipse cx="7.5" cy="2.5" rx="6.5" ry="2" fill="#dde4ea" stroke="#8b97a3" /><path d="M1 2.5v9c0 1 3 2 6.5 2s6.500-1 6.500-2v-9" fill="#b8c4cf" stroke="#8b97a3" /></svg>
)

const tocRows: TocItem[] = [
  { lvl: 0, exp: true, icon: 'layers', text: '图层', bold: true },
  { lvl: 1, exp: true, icon: 'db', text: '路径:{5618D3D7-F71E-48BC-A8F3' },
  { lvl: 2, exp: true, chk: true, text: '停靠点' },
  { lvl: 3, sym: 'blue', text: '已定位' },
  { lvl: 3, sym: 'pale', text: '未定位' },
  { lvl: 3, sym: 'red', text: '错误' },
  { lvl: 3, sym: 'square', text: '时间冲突' },
  { lvl: 2, exp: true, chk: true, text: '点障碍' },
  { lvl: 3, sym: 'qMark', text: '错误' },
  { lvl: 3, sym: 'cross', text: '禁止型' },
  { lvl: 3, sym: 'ring', text: '成本增加型' },
  { lvl: 2, exp: true, chk: true, text: '路径' },
  { lvl: 3, sym: 'navy', text: '路径' },
  { lvl: 2, exp: true, chk: true, text: '线障碍' },
  { lvl: 3, sym: 'redLine', text: '禁止型' },
  { lvl: 3, sym: 'redHollow', text: '成本按比例增加型' },
  { lvl: 2, exp: true, chk: true, text: '面障碍' },
  { lvl: 3, sym: 'poly', text: '禁止型' },
  { lvl: 3, sym: 'polyHollow', text: '成本按比例增加型' },
  { lvl: 1, exp: true, icon: 'db', text: 'C:\\Users\\Administrator\\Desktop' },
  { lvl: 2, exp: true, icon: 'group', text: '路网' },
  { lvl: 3, chk: true, text: '路径', sel: true },
  { lvl: 3, exp: true, chk: true, text: '地铁出入口' },
  { lvl: 4, sym: 'subway' },
  { lvl: 3, exp: true, chk: true, text: '交通网络_Junctions' },
  { lvl: 4, sym: 'junction' },
  { lvl: 3, exp: true, chk: true, text: '地铁' },
  { lvl: 4, sym: 'metro' },
  { lvl: 3, exp: true, chk: true, text: '路口转弯' },
  { lvl: 4, sym: 'turn' },
  { lvl: 3, exp: true, chk: true, text: '道路' },
  { lvl: 4, sym: 'road' },
  { lvl: 3, exp: true, chk: true, text: '交通网络' },
  { lvl: 4, sym: 'edge', text: '边' },
]

const TocEntry = ({ item }: { item: TocItem }) => {
  let mark: React.ReactNode = null
  if (item.icon === 'layers') {
    mark = (
      <svg width="16" height="14" viewBox="0 0 16 14"><path d="M4 1h11l-3 3H1zM4 5h11l-3 3H1zM4 9h11l-3 3H1z" fill="#e9c46e" stroke="#a9842a" strokeWidth=".8" /></svg>
    )
  } else if (item.icon === 'db') {
    mark = dbIcon
  } else if (item.icon === 'group') {
    mark = (
      <svg width="16" height="14" viewBox="0 0 16 14"><rect x=".5" y=".5" width="10" height="8" fill="#e8eef4" stroke="#567" /><rect x="5.5" y="5.5" width="10" height="8" fill="#e8eef4" stroke="#567" /></svg>
    )
  }
  if (item.sym) {
    const deep = item.lvl === 4
    return (
      <TocRow $lvl={deep ? 3 : 2}>
        <Gap $w={deep ? 28 : 20} />
        <Sym $w={deep ? 16 : 24}>{legend[item.sym]}</Sym>
        {item.text ? <><Gap $w={deep ? 5 : 6} />{item.text}</> : null}
      </TocRow>
    )
  }
  return (
    <TocRow $lvl={item.lvl}>
      {item.exp ? <Exp /> : <Expander $none />}
      {item.chk ? <><Gap $w={8} /><Check /><Gap $w={8} /></> : null}
      {mark ? <><Gap $w={6} />{mark}<Gap $w={5} /></> : null}
      {item.bold ? <BoldLabel>{item.text}</BoldLabel> : item.sel ? <SelLabel>{item.text}</SelLabel> : item.text}
    </TocRow>
  )
}

const Chevron = ({ size = 14 }: { size?: number }) => <ChevronDown size={size} strokeWidth={1.5} color="#666" />

/* ---------- page ---------- */

const App = () => {
  const menus = ['文件(F)', '编辑(E)', '视图(V)', '书签(B)', '插入(I)', '选择(S)', '地理处理(G)', '自定义(C)', '窗口(W)', '帮助(H)']
  const route = routeLine.map((p) => p.map((v) => v.toFixed(1)).join(',')).join(' ')
  return (
    <Page>
      <Global />
      <TitleBar>
        <svg width="19" height="20" viewBox="0 0 19 20">
          <circle cx="9" cy="9" r="8.5" fill="#2b6f9c" />
          <path d="M4 5c3-3 8-2 9 2s-3 4-4 7c-3 0-6-5-5-9z" fill="#6fa84a" />
          <circle cx="9" cy="8" r="4.5" fill="#cfe2ee" stroke="#123" />
          <path d="M12 12l5 6" stroke="#345" strokeWidth="2.5" />
        </svg>
        最短路径分析.mxd - ArcMap
        <WinButtons>
          <WinButton><svg width="12" height="12"><path d="M0 6.5h12" stroke="#111" /></svg></WinButton>
          <WinButton><svg width="12" height="12"><path d="M.5 3.5h8v8h-8zM3 3V.5h8.5V9H9" stroke="#111" fill="none" /></svg></WinButton>
          <WinButton><svg width="13" height="13"><path d="M.5.5l12 12M12.5.5l-12 12" stroke="#111" /></svg></WinButton>
        </WinButtons>
      </TitleBar>

      <MenuBar>
        {menus.map((m) => <MenuItem key={m}>{m}</MenuItem>)}
      </MenuBar>

      <Docks>
        <DockRow $h={27}>
          <Bar $left={148} $w={384}>
            <Grip />
            <Tools spec="-pZoomIn -pZoomOut -pHand -pFull -p11 | -fixIn -fixOut | -pBack -pFwd" />
            <Combo $w={59} $sunk={false}>100%<ComboArrow><Chevron size={12} /></ComboArrow></Combo>
            <Sep />
            <Tools spec="*layoutPage -refreshOff arrows pages" />
            <BarEnd />
          </Bar>
          <Bar $left={3} $w={616}>
            <Grip />
            <Tools spec="newDoc open save print | cut copy paste del | undo -redo | addData" />
            <Caret />
            <Sep />
            <Combo $w={147}><ComboArrow><Chevron size={12} /></ComboArrow></Combo>
            <Gap $w={4} />
            <Tools spec="*editTool | wTable wCat wGlobe wRed wCmd | model" />
            <BarEnd />
          </Bar>
        </DockRow>
        <DockRow $h={26}>
          <Bar $left={3} $w={525}>
            <Grip />
            <Tools spec="zoomIn zoomOut hand globe | fixIn fixOut | back fwd | selMap" />
            <Caret />
            <Tools spec="clear | pointer | identify -flash find | -measure | binocular graph xy | -clock | viewer" />
            <BarEnd />
          </Bar>
        </DockRow>
        <DockRow $h={27}>
          <Bar $left={174} $w={481}>
            <Grip />
            <BarLabel>Network Analyst</BarLabel>
            <Caret />
            <Sep />
            <Tool $on><Glyph k="naWin" /></Tool>
            <Sep />
            <Tools spec="*flagPlus flagBreak routeGrid solve |" />
            <RouteCombo $w={175}>交通网络<ComboArrow $bare><Chevron /></ComboArrow></RouteCombo>
            <Tools spec="gridInfo gridTool" />
            <BarEnd />
          </Bar>
          <Bar $left={5} $w={437}>
            <Grip />
            <BarLabel>编辑器(R)</BarLabel>
            <Caret />
            <Sep />
            <Tools spec="-arrowR -arrowA | -line -curve -polyEd ^ -sparkle | -boxDiag -trace -splitBox -cross -rotate | -attr -sketch | -task" />
            <BarEnd />
          </Bar>
          <Bar $left={3} $w={510}>
            <Grip />
            <BarLabel>3D Analyst</BarLabel>
            <Caret />
            <Sep />
            <Combo $w={178} $sunk><ComboArrow $box>▾</ComboArrow></Combo>
            <Tools spec="-terrainA -terrainB -terrainC -terrainD -terrainE -terrainF | scatter ^ | scene | arcGlobe" />
            <BarEnd />
          </Bar>
        </DockRow>
        <DockRow $h={26}>
          <Bar $left={1220} $w={393}>
            <Grip />
            <BarLabel>TIN 编辑(T)</BarLabel>
            <Caret />
            <Sep />
            <Tools spec="-tinA -tinA -tinA | -xBox -xBoxD -xBox | -tinB -tinC -tinD -tinE -tinF ^ -tinG" />
            <BarEnd />
          </Bar>
          <Bar $left={9} $w={244}>
            <Grip />
            <Gap $w={2} />
            <Combo $w={178} $sunk><ComboArrow $box>▾</ComboArrow></Combo>
            <Tools spec="-terrainA -bars" />
            <BarEnd />
          </Bar>
        </DockRow>
      </Docks>

      <Main>
        <Panel $w={200} $mr={4}>
          <PanelHead>Network Analyst<HeadIcons><Pin /><Close /></HeadIcons></PanelHead>
          <RouteSelect>
            <SelectBox>路径<Chevron /></SelectBox>
            <SquareBtn><svg width="12" height="12" viewBox="0 0 12 12"><path d="M.5.5h11v11H.5zM2 3.5h8M2 6h8M2 8.5h8" stroke="#111" fill="none" /></svg></SquareBtn>
          </RouteSelect>
          <NaTree>
            <NaRow $lvl={0} $head><Exp /><NaText>停靠点 (2)</NaText></NaRow>
            <NaRow $lvl={1}><Dot>1</Dot><NaText>图形选择 1</NaText></NaRow>
            <NaRow $lvl={1}><Dot>2</Dot><NaText $hl="cyan">图形选择 2</NaText></NaRow>
            <NaRow $lvl={0} $head><Exp plus /><NaText>路径 (1)</NaText></NaRow>
            <NaRow $lvl={0} $head><Exp /><NaText $hl="blue">点障碍 (1)</NaText></NaRow>
            <NaRow $lvl={1} $head><Exp /><NaText>禁止型 (1)</NaText></NaRow>
            <NaRow $lvl={2}><XSlot><RedX /></XSlot><NaText $hl="cyan">图形选择 3</NaText></NaRow>
            <NaRow $lvl={1} $head><Expander $none /><NaText>成本增加型 (0)</NaText></NaRow>
            <NaRow $lvl={0} $head><Exp /><NaText>线障碍 (0)</NaText></NaRow>
            <NaRow $lvl={1} $head><Expander $none /><NaText>禁止型 (0)</NaText></NaRow>
            <NaRow $lvl={1} $head><Expander $none /><NaText>成本按比例增加型 (0)</NaText></NaRow>
            <NaRow $lvl={0} $head><Exp /><NaText>面障碍 (0)</NaText></NaRow>
            <NaRow $lvl={1} $head><Expander $none /><NaText>禁止型 (0)</NaText></NaRow>
            <NaRow $lvl={1} $head><Expander $none /><NaText>成本按比例增加型 (0)</NaText></NaRow>
          </NaTree>
          <SolveNote>求解已完成</SolveNote>
        </Panel>

        <Panel $w={265} $mr={4}>
          <PanelHead>内容列表<HeadIcons><Pin /><Close /></HeadIcons></PanelHead>
          <MiniBar>
            <Tools spec="tocList *tocSource tocVis tocSel | tocOpts" />
          </MiniBar>
          <TocBox>
            <TocList>
              {tocRows.map((item, i) => <TocEntry key={i} item={item} />)}
            </TocList>
            <VScroll>
              <ScrollEnd><ChevronUp size={15} strokeWidth={2.5} /></ScrollEnd>
              <VThumb $h={560} $top={0} />
              <ScrollEnd $end><ChevronDown size={15} strokeWidth={2.5} /></ScrollEnd>
            </VScroll>
            <HScroll>
              <ChevronLeft size={16} strokeWidth={2.5} />
              <HThumb $w={80} $left={6} $h={19} />
              <PushEnd><ChevronRight size={16} strokeWidth={2.5} /></PushEnd>
            </HScroll>
          </TocBox>
        </Panel>

        <MapPane>
          <MapFrame>
            <MapSvg width="1200" height="821" viewBox="475 165 1200 821">
              <g fill="none" stroke="#77751f" strokeWidth="1.3" strokeLinejoin="round">
                {roadLines.map((pts, i) => <polyline key={i} points={pts} />)}
              </g>
              {nodeList.map((p, i) => (
                <g key={i}>
                  <circle cx={p[0]} cy={p[1]} r="4.2" fill="#000" />
                  <circle cx={p[0]} cy={p[1]} r="2.6" fill="#7d0a3f" />
                </g>
              ))}
              <polyline points={route} fill="none" stroke="#001a80" strokeWidth="6" />
              <circle cx="1052" cy="354" r="9.5" fill="#0a2cff" />
              <text x="1052" y="358.5" textAnchor="middle" fontSize="12" fontWeight="700" fontFamily="Liberation Sans" fill="#fff">1</text>
              <circle cx="702" cy="886" r="10" fill="#00ffff" />
              <text x="702" y="890.5" textAnchor="middle" fontSize="12" fontWeight="700" fontFamily="Liberation Sans" fill="#fff">2</text>
              <circle cx="893" cy="630" r="10.5" fill="#00ffff" />
              <path d="M888 625l10 10M898 625l-10 10" stroke="#fff" strokeWidth="3.6" />
            </MapSvg>
          </MapFrame>
          <VScroll>
            <ScrollEnd><ChevronUp size={15} strokeWidth={2.5} /></ScrollEnd>
            <VThumb $h={20} $top={384} />
            <ScrollEnd $end><ChevronDown size={15} strokeWidth={2.5} /></ScrollEnd>
          </VScroll>
          <MapBar>
            <ViewBtn $on><svg width="11" height="11"><rect x=".5" y=".5" width="10" height="10" fill="#9bbf6c" stroke="#456" /></svg></ViewBtn>
            <Gap $w={3} />
            <ViewBtn><svg width="11" height="11"><path d="M1.5.5h6l2 2v8h-8z" fill="#fff" stroke="#456" /></svg></ViewBtn>
            <Sep />
            <Gap $w={4} />
            <ViewBtn><svg width="12" height="12" viewBox="0 0 12 12"><path d="M2 5a4 4 0 017-2M10 7a4 4 0 01-7 2" stroke="#1a5aa8" strokeWidth="1.4" fill="none" /><path d="M9.5 0v4h-4zM2.5 12V8h4z" fill="#1a5aa8" /></svg></ViewBtn>
            <Gap $w={2} />
            <ViewBtn><svg width="10" height="10"><path d="M2 1h2v8H2zM6 1h2v8H6z" fill="#1a5aa8" /></svg></ViewBtn>
            <Gap $w={3} />
            <ChevronLeft size={14} strokeWidth={2.5} />
            <HThumb $w={17} $left={545} $h={17} />
            <PushEnd><ChevronRight size={14} strokeWidth={2.5} /></PushEnd>
          </MapBar>
        </MapPane>

        <RightPanel>
          <PanelHead>创建要素<HeadIcons><Pin /><Close /></HeadIcons></PanelHead>
          <MiniBar>
            <Tools spec="-funnel" />
            <Caret />
            <Tools spec="-list" />
            <SearchBox>&lt;搜索&gt;<ComboArrow $bare>▾</ComboArrow></SearchBox>
            <Tools spec="-searchOff -searchX" />
          </MiniBar>
          <PanelBody $h={632}>没有可供显示的模板。</PanelBody>
          <Splitter>
            <SplitLine />
            <SplitBtn>»</SplitBtn>
            <SplitBtn>|</SplitBtn>
          </Splitter>
          <Construct>
            <ConstructHead><Glyph k="task" />构造工具</ConstructHead>
            <ConstructNote>选择模板。</ConstructNote>
          </Construct>
        </RightPanel>

        <SideTabs>
          <Glyph k="wCat" />
          <SideLabel>目录</SideLabel>
          <Glyph k="wGlobe" />
          <SideLabel>搜索</SideLabel>
        </SideTabs>
      </Main>

      <StatusBar>98681.484  25629.011 未知单位</StatusBar>

      <Callout width="1920" height="1030" viewBox="0 0 1920 1030">
        <rect x="366.5" y="103.5" width="30" height="40" fill="none" stroke="#e8262e" strokeWidth="1" />
        <path d="M392 137L592 373L595 375L787 607L710 520L588 381L592 373" fill="#fff" fillOpacity=".4" stroke="none" />
        <path d="M392 137L592 373L595 375L713 520L787 607" fill="none" stroke="#f0757b" />
        <path d="M387 140L588 377L588 381L710 520L787 607" fill="none" stroke="#e8383f" />
        <path d="M745 563L775 596" stroke="#d81a24" strokeWidth="2" />
      </Callout>
      <Watermark>CSDN @关于作业的二三事</Watermark>
    </Page>
  )
}

export default App
